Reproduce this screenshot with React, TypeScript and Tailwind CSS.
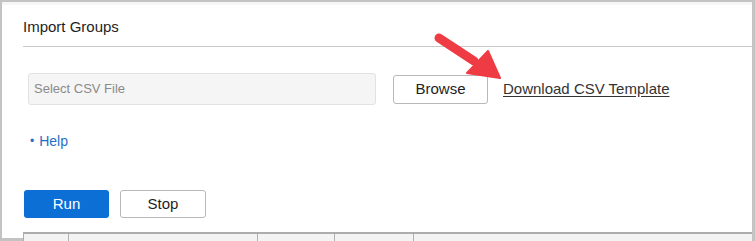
import React from 'react';

const font = { fontFamily: '"Liberation Sans", Arial, sans-serif' };

const Arrow = () => (
  <svg
    className="absolute left-[428px] top-[28px] pointer-events-none"
    width="80"
    height="56"
    viewBox="430 30 80 56"
  >
    <line x1="439" y1="38" x2="474" y2="61" stroke="#ef3b43" strokeWidth="9" strokeLinecap="round" />
    <polygon points="488,51 467,73 500,78" fill="#ef3b43" stroke="#ef3b43" strokeWidth="2" strokeLinejoin="round" />
  </svg>
);

const App = () => {
  return (
    <div className="w-[755px] h-[241px] bg-white overflow-hidden" style={font}>
      <div className="relative w-full h-full border-t-2 border-l-2 border-r-[3px] border-b-[3px] border-[#c3c3c3] flex flex-col">
        <div className="h-[3px] shrink-0 bg-[#f6f6f6]" />
        <div className="ml-[21px] flex flex-col">
          <div className="h-[42px] shrink-0 pt-[4px] flex items-center border-b border-[#c9c9c9]">
            <span className="text-[15px] text-[#1e1e1e]">Import Groups</span>
          </div>

          <div className="mt-[26px] ml-[5px] flex items-center">
            <div className="w-[348px] h-[32px] bg-[#f5f5f5] border border-[#e2e2e2] rounded-[3px] flex items-center px-[5px]">
              <span className="text-[13px] text-[#8a8a8a]">Select CSV File</span>
            </div>
            <button className="ml-[17px] w-[95px] h-[29px] bg-white border border-[#b8b8b8] rounded-[3px] text-[15px] text-[#1e1e1e]">
              Browse
            </button>
            <a className="ml-[15px] text-[15px] text-[#333] underline underline-offset-2 cursor-pointer">
              Download CSV Template
            </a>
          </div>

          <div className="mt-[26px] ml-[7px] h-[20px] flex items-center text-[14px] text-[#1f6fc6]">
            <span className="mr-[5px] text-[12px]">•</span>
            <span>Help</span>
          </div>

          <div className="mt-[39px] ml-[1px] flex items-center gap-[11px]">
            <button className="w-[85px] h-[28px] bg-[#0b6fd6] rounded-[3px] text-[15px] text-white">Run</button>
            <button className="w-[86px] h-[28px] bg-white border border-[#b8b8b8] rounded-[3px] text-[15px] text-[#1e1e1e]">
              Stop
            </button>
          </div>

          <div className="mt-[14px] border-t-2 border-l border-[#adadad] h-[20px] flex">
            <div className="w-[45px] border-r border-[#b0b0b0] bg-[#f3f3f3]" />
            <div className="w-[189px] border-r border-[#b0b0b0] bg-[#f3f3f3]" />
            <div className="w-[77px] border-r border-[#b0b0b0] bg-[#f3f3f3]" />
            <div className="w-[79px] border-r border-[#b0b0b0] bg-[#f3f3f3]" />
            <div className="flex-1 bg-[#f3f3f3]" />
          </div>
        </div>
        <Arrow />
      </div>
    </div>
  );
};

export default App;
